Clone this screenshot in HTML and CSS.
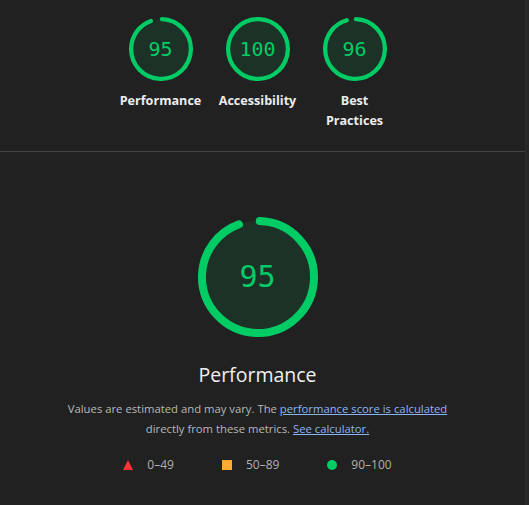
FILE: index.html
```html
<!DOCTYPE html>
<html lang="en">
<head>
<meta charset="utf-8">
<title>Lighthouse Report</title>
<link rel="stylesheet" href="styles.css">
</head>
<body>
<div class="page">
  <main class="report">
    <header class="scores">
      <div class="gauge-item">
        <svg class="gauge gauge--small" viewBox="0 0 120 120">
          <circle class="gauge-base" cx="60" cy="60" r="56"></circle>
          <circle class="gauge-arc" cx="60" cy="60" r="56" stroke-dasharray="330.2 351.86" transform="rotate(-88.2 60 60)"></circle>
        </svg>
        <div class="gauge-pct gauge-pct--small">95</div>
        <div class="gauge-label">Performance</div>
      </div>
      <div class="gauge-item">
        <svg class="gauge gauge--small" viewBox="0 0 120 120">
          <circle class="gauge-base" cx="60" cy="60" r="56"></circle>
          <circle class="gauge-arc" cx="60" cy="60" r="56" stroke-dasharray="351.86 351.86" transform="rotate(-88.2 60 60)"></circle>
        </svg>
        <div class="gauge-pct gauge-pct--small">100</div>
        <div class="gauge-label">Accessibility</div>
      </div>
      <div class="gauge-item">
        <svg class="gauge gauge--small" viewBox="0 0 120 120">
          <circle class="gauge-base" cx="60" cy="60" r="56"></circle>
          <circle class="gauge-arc" cx="60" cy="60" r="56" stroke-dasharray="333.8 351.86" transform="rotate(-88.2 60 60)"></circle>
        </svg>
        <div class="gauge-pct gauge-pct--small">96</div>
        <div class="gauge-label">Best<br>Practices</div>
      </div>
    </header>

    <section class="category">
      <div class="big-gauge">
        <svg class="gauge gauge--big" viewBox="0 0 120 120">
          <circle class="gauge-base" cx="60" cy="60" r="56"></circle>
          <circle class="gauge-arc" cx="60" cy="60" r="56" stroke-dasharray="330.2 351.86" transform="rotate(-88.2 60 60)"></circle>
        </svg>
        <div class="gauge-pct gauge-pct--big">95</div>
      </div>
      <h2 class="category-title">Performance</h2>
      <p class="category-desc">Values are estimated and may vary. The <a href="#">performance score is calculated</a> directly from these metrics. <a href="#">See calculator.</a></p>
      <div class="legend">
        <span class="legend-item"><span class="shape shape--fail"></span>0–49</span>
        <span class="legend-item"><span class="shape shape--average"></span>50–89</span>
        <span class="legend-item"><span class="shape shape--pass"></span>90–100</span>
      </div>
    </section>
  </main>
  <div class="scroll-edge"></div>
</div>
</body>
</html>
```
FILE: styles.css
```css
html, body {
  margin: 0;
  padding: 0;
  background: #212121;
}

body {
  font-family: "Open Sans", "Noto Sans", sans-serif;
  color: #e8e8e8;
}

.page {
  display: flex;
  min-height: 505px;
}

.report {
  flex: 0 0 526px;
  box-sizing: border-box;
  border-right: 1px solid #2c2c2c;
}

.scroll-edge {
  flex: 1;
  background: #262626;
}

.scores {
  display: flex;
  justify-content: center;
  padding: 17px 10px 20px 0;
  border-bottom: 1px solid #444444;
}

.gauge-item {
  position: relative;
  width: 97px;
  display: flex;
  flex-direction: column;
  align-items: center;
}

.gauge {
  display: block;
}

.gauge--small {
  width: 64px;
  height: 64px;
}

.gauge--big {
  width: 120px;
  height: 120px;
}

.gauge-base {
  fill: rgba(0, 204, 102, 0.1);
  stroke: none;
}

.gauge-arc {
  fill: none;
  stroke: #00cc66;
  stroke-width: 8;
  stroke-linecap: round;
}

.gauge-pct {
  position: absolute;
  left: 0;
  right: 0;
  text-align: center;
  font-family: "DejaVu Sans Mono", "Liberation Mono", monospace;
  color: #00cc66;
}

.gauge-pct--small {
  top: 0;
  height: 64px;
  line-height: 64px;
  font-size: 20px;
}

.gauge-pct--big {
  top: 0;
  height: 120px;
  line-height: 120px;
  font-size: 30px;
}

.gauge-label {
  margin-top: 10px;
  font-size: 12.6px;
  font-weight: 700;
  line-height: 20px;
  text-align: center;
  color: #ececec;
}

.category {
  display: flex;
  flex-direction: column;
  align-items: center;
  padding: 65px 10px 0 0;
}

.big-gauge {
  position: relative;
  width: 120px;
  height: 120px;
}

.category-title {
  margin: 25px 0 0;
  font-size: 19.5px;
  font-weight: 400;
  line-height: 26px;
  color: #f0f0f0;
}

.category-desc {
  margin: 11px 0 0;
  max-width: 400px;
  font-size: 11.3px;
  line-height: 20px;
  text-align: center;
  color: #b8b8b8;
}

.category-desc a {
  color: #8ab4f8;
  text-decoration: underline;
}

.legend {
  display: flex;
  gap: 48px;
  margin-top: 16px;
  font-size: 12px;
  line-height: 20px;
  color: #b0b0b0;
}

.legend-item {
  display: flex;
  align-items: center;
  gap: 14px;
}

.shape {
  display: inline-block;
  width: 10px;
  height: 10px;
}

.shape--fail {
  width: 0;
  height: 0;
  border-left: 5px solid transparent;
  border-right: 5px solid transparent;
  border-bottom: 10px solid #ff3333;
}

.shape--average {
  background: #ffaa33;
}

.shape--pass {
  background: #00cc66;
  border-radius: 50%;
}
```
